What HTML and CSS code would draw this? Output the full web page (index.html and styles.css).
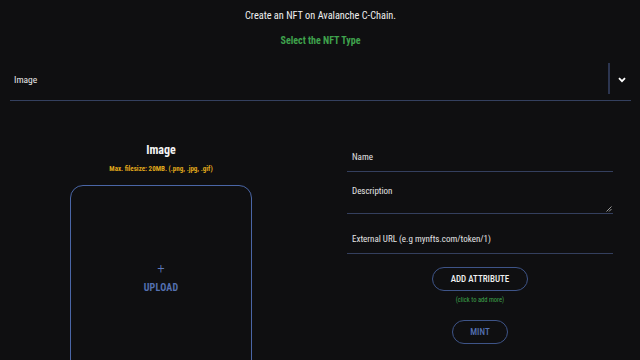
FILE: index.html
```html
<!DOCTYPE html>
<html lang="en">
<head>
    <meta charset="UTF-8">
    <meta name="viewport" content="width=device-width, initial-scale=1.0">
    <link rel="stylesheet" href="styles.css">
</head>
<body>
    <div class="page">
        <p class="intro">Create an NFT on Avalanche C-Chain.</p>
        <p class="type-label">Select the NFT Type</p>

        <div class="select">
            <span class="select-value">Image</span>
            <span class="select-divider"></span>
            <svg class="chevron" width="8" height="6" viewBox="0 0 8 6">
                <path d="M1 1.2 L4 4.2 L7 1.2" fill="none" stroke="#fff" stroke-width="1.8"/>
            </svg>
        </div>

        <div class="form-row">
            <div class="media-col">
                <h2 class="media-title">Image</h2>
                <p class="media-hint">Max. filesize: 20MB. (.png, .jpg, .gif)</p>
                <div class="dropzone">
                    <span class="plus">+</span>
                    <span class="upload">UPLOAD</span>
                </div>
            </div>

            <div class="fields-col">
                <div class="field">Name</div>
                <div class="field field-area">Description
                    <svg class="grip" width="6" height="6" viewBox="0 0 6 6">
                        <path d="M5.5 0.5 L0.5 5.5 M5.5 3 L3 5.5" stroke="#9a9a9a" stroke-width="1"/>
                    </svg>
                </div>
                <div class="field field-url">External URL (e.g mynfts.com/token/1)</div>

                <div class="actions">
                    <button class="pill">ADD ATTRIBUTE</button>
                    <span class="note">(click to add more)</span>
                    <button class="pill pill-mint">MINT</button>
                </div>
            </div>
        </div>
    </div>
</body>
</html>
```

FILE: styles.css
```css
body {
    font-family: "Roboto Condensed", Roboto, "Liberation Sans Narrow", "Liberation Sans", sans-serif;
    font-stretch: 80%;
    background-color: #0f0f11;
    color: #e8e8e8;
    margin: 0;
    padding: 0;
    height: 360px;
    overflow: hidden;
}
.page {
    padding: 8px 9px 0 10px;
}
.intro {
    margin: 0;
    text-align: center;
    font-size: 10.3px;
    line-height: 16px;
    color: #f0f0f0;
}
.type-label {
    margin: 9px 0 0;
    text-align: center;
    font-size: 10px;
    font-weight: 700;
    line-height: 16px;
    color: #3fa34d;
}
.select {
    margin-top: 11px;
    height: 40px;
    display: flex;
    align-items: center;
    border-bottom: 1px solid #34405f;
}
.select-value {
    flex: 1;
    padding-left: 4px;
    font-size: 9.5px;
    color: #e8e8e8;
    padding-bottom: 2px;
}
.select-divider {
    width: 2px;
    height: 31px;
    margin-bottom: 4px;
    background-color: #2c3550;
}
.chevron {
    margin: 0 5px 0 8px;
}
.form-row {
    display: flex;
    margin-top: 40px;
}
.media-col {
    width: 302px;
    display: flex;
    flex-direction: column;
    align-items: center;
}
.media-title {
    margin: 1px 0 0;
    font-size: 12px;
    font-weight: 700;
    color: #f4f4f4;
    line-height: 16px;
}
.media-hint {
    margin: 6px 0 0;
    font-size: 7px;
    font-weight: 700;
    color: #e0a91c;
    line-height: 10px;
}
.dropzone {
    margin-top: 11px;
    width: 182px;
    height: 190px;
    border: 1.5px solid #4a66a6;
    border-radius: 13px;
    display: flex;
    flex-direction: column;
    align-items: center;
    padding-top: 75px;
    box-sizing: border-box;
}
.plus {
    font-size: 15px;
    line-height: 14px;
    color: #5d78b8;
    font-weight: 300;
}
.upload {
    margin-top: 7px;
    font-size: 10px;
    font-weight: 700;
    color: #5470b0;
    letter-spacing: 0.2px;
}
.fields-col {
    margin-left: 35px;
    width: 266px;
    display: flex;
    flex-direction: column;
    padding-top: 4px;
}
.field {
    position: relative;
    font-size: 9px;
    color: #e4e4e4;
    padding: 5px 4px 7px 5px;
    border-bottom: 1px solid #343f5e;
    line-height: 14px;
}
.field-area {
    margin-top: 7px;
    padding-bottom: 15px;
}
.field-url {
    margin-top: 13px;
}
.grip {
    position: absolute;
    right: 1px;
    bottom: 1px;
}
.actions {
    display: flex;
    flex-direction: column;
    align-items: center;
    margin-top: 13px;
}
.pill {
    font-family: inherit;
    font-stretch: inherit;
    background: transparent;
    border: 1px solid #3e5488;
    border-radius: 12px;
    color: #f0f0f0;
    font-size: 9px;
    font-weight: 500;
    height: 24px;
    padding: 0 18px;
    cursor: pointer;
}
.note {
    margin-top: 4px;
    font-size: 6.5px;
    color: #3fa34d;
    line-height: 10px;
}
.pill-mint {
    margin-top: 15px;
    width: 56px;
    padding: 0;
    color: #5470b0;
}
```
